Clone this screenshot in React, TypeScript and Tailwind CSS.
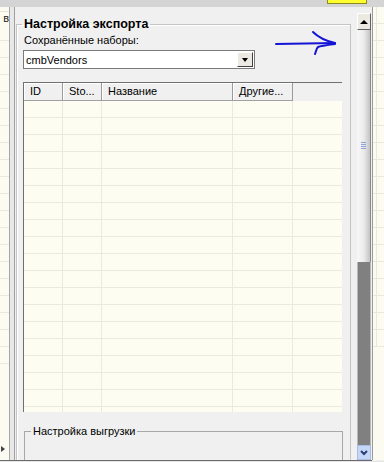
import React from "react";

const rows = Array.from({ length: 20 });
const cols = [39, 39, 131, 60, 50];

function LeftStrip() {
  return (
    <div className="flex h-full w-[15px] shrink-0">
      <div className="relative flex w-[9px] flex-col overflow-hidden bg-[#fbfbf2]">
        <div className="h-[5px] border-b border-[#e4e4d8]" />
        <div className="flex h-[12px] justify-end text-[11px] leading-[12px] text-[#222]">в</div>
        {rows.map((_, i) => (
          <div key={i} className="h-[17px] shrink-0 border-b border-[#e8e8dc]" />
        ))}
        <div className="absolute bottom-[8px] left-[1px] h-0 w-0 border-y-[3px] border-l-[4px] border-y-transparent border-l-[#444]" />
      </div>
      <div className="w-[1px] bg-[#a8a8a8]" />
      <div className="w-[4px] bg-[#e8e8e8]" />
      <div className="w-[1px] bg-[#a0a0a0]" />
    </div>
  );
}

function Combo() {
  return (
    <div className="ml-[6px] mt-[3px] flex h-[19px] w-[232px] items-center border border-[#7a7a7a] bg-white pl-[2px]">
      <span className="flex-1 leading-[14px]">cmbVendors</span>
      <div className="mr-[1px] flex h-[15px] w-[16px] items-center justify-center border border-b-[#404040] border-l-white border-r-[#404040] border-t-white bg-[#ece9e3]">
        <div className="h-0 w-0 border-x-[3px] border-t-[4px] border-x-transparent border-t-black" />
      </div>
    </div>
  );
}

function Grid() {
  return (
    <div className="ml-[6px] mt-[13px] flex h-[330px] w-[319px] flex-col overflow-hidden border-l border-t border-[#707070] bg-[#fdfdf1]">
      <div className="flex h-[18px] shrink-0 bg-[#f0f0f0]">
        {["ID", "Sto...", "Название", "Другие...", ""].map((t, i) => (
          <div
            key={i}
            style={{ width: cols[i] }}
            className={
              i < 4
                ? "shrink-0 border-b border-r border-b-[#a0a0a0] border-r-[#9a9a9a] pl-[6px] leading-[17px] shadow-[inset_1px_1px_0_#ffffff]"
                : "shrink-0 border-b border-[#f0f0f0] pl-[6px] leading-[17px]"
            }
          >
            {t}
          </div>
        ))}
      </div>
      {rows.map((_, r) => (
        <div key={r} className="flex h-[17px] shrink-0 border-b border-[#ebebdc]">
          {cols.map((w, c) => (
            <div
              key={c}
              style={{ width: w }}
              className={c < 4 ? "shrink-0 border-r border-[#ebebdc]" : "shrink-0"}
            />
          ))}
        </div>
      ))}
    </div>
  );
}

function Panel() {
  return (
    <div className="h-full w-[342px] shrink-0 overflow-hidden bg-[#f0f0f0]">
      <fieldset className="ml-[1px] mt-[10px] h-[470px] w-[335px] border border-[#c4c4c4] shadow-[inset_1px_1px_0_#ffffff]">
        <legend className="ml-[5px] px-[2px] text-[12.5px] font-bold leading-[14px]">Настройка экспорта</legend>
        <div className="ml-[7px] mt-[2px] leading-[14px]">Сохранённые наборы:</div>
        <Combo />
        <Grid />
        <fieldset className="ml-[7px] mt-[12px] h-[60px] w-[319px] border border-[#a8a8a8]">
          <legend className="ml-[6px] px-[2px] leading-[14px]">Настройка выгрузки</legend>
        </fieldset>
      </fieldset>
    </div>
  );
}

function ScrollBar() {
  return (
    <div className="flex h-full w-[14px] shrink-0 flex-col">
      <div className="h-[6px] bg-[#f0f0f0]" />
      <div className="flex h-[17px] items-center justify-center border border-b-[#606060] border-l-white border-r-[#606060] border-t-white bg-[#ece9e3]">
        <div className="h-0 w-0 border-x-[4px] border-b-[4px] border-x-transparent border-b-black" />
      </div>
      <div className="flex h-[232px] items-center justify-center border-r border-[#8a8a8a] bg-[linear-gradient(90deg,#f8f8f8,#ececec_50%,#c4c4c4)]">
        <div className="-mt-[2px] flex w-[5px] flex-col gap-[1px]">
          <div className="h-[1px] bg-[#8ea4d8]" />
          <div className="h-[1px] bg-[#8ea4d8]" />
          <div className="h-[1px] bg-[#8ea4d8]" />
          <div className="h-[1px] bg-[#8ea4d8]" />
        </div>
      </div>
      <div className="h-[183px] border-x border-x-[#b8b8b8] bg-[#808080]" />
      <div className="flex h-[15px] items-center justify-center border border-[#a8bce8] bg-[#c6d6f6]">
        <svg width="8" height="6" viewBox="0 0 8 6">
          <path d="M1 1 L4 4 L7 1" stroke="#2a3f7a" strokeWidth="2" fill="none" />
        </svg>
      </div>
    </div>
  );
}

function RightStrip() {
  return (
    <div className="flex h-full w-[13px] shrink-0">
      <div className="w-[1px] bg-[#f0f0f0]" />
      <div className="w-[1px] bg-[#9a9a9a]" />
      <div className="flex flex-1 flex-col overflow-hidden bg-[#fbfbf2]">
        {rows.map((_, i) => (
          <div key={i} className="flex h-[17px] shrink-0 border-b border-[#e8e8dc]">
            <div className="w-[4px] border-r border-[#e8e8dc]" />
          </div>
        ))}
      </div>
    </div>
  );
}

export default function App() {
  return (
    <div className="relative flex h-[462px] w-[384px] flex-col overflow-hidden bg-[#f0f0f0] font-['Liberation_Sans',Arial,sans-serif] text-[11px] text-black">
      <div className="flex h-[7px] shrink-0 bg-[#d4d4d4]">
        <div className="ml-[327px] h-[4px] w-[40px] shrink-0 border border-t-0 border-[#8c8c20] bg-[#ffff30]" />
      </div>
      <div className="flex h-[453px] shrink-0">
        <LeftStrip />
        <Panel />
        <ScrollBar />
        <RightStrip />
      </div>
      <div className="h-[1px] w-[372px] shrink-0 bg-[#6c6c6c]" />
      <div className="h-[1px] shrink-0 bg-[#e4e4e4]" />
      {/* hand-drawn arrow annotation */}
      <svg className="absolute left-[274px] top-[30px]" width="66" height="28" viewBox="0 0 66 28">
        <g stroke="#1414d6" strokeWidth="2" fill="none" strokeLinecap="round">
          <path d="M2 14 L61 13" />
          <path d="M39 2 C44 7 52 11 61 13" />
          <path d="M61 14 C53 15 46 16 44 17 C42 19 42 22 41 24" />
        </g>
      </svg>
    </div>
  );
}
